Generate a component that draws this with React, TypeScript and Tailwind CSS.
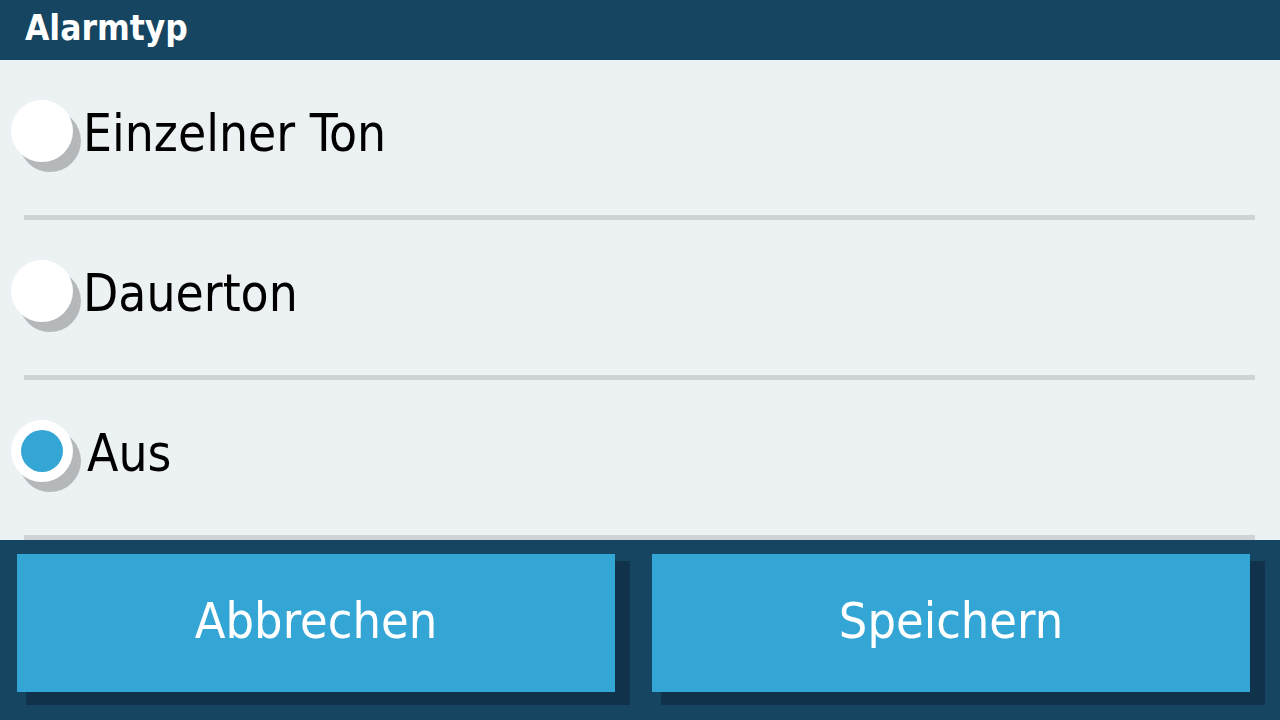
import { useState } from "react";

const options = [
    { id: "single", label: "Einzelner Ton" },
    { id: "continuous", label: "Dauerton" },
    { id: "off", label: "Aus" },
];

export default function App() {
    const [selected, setSelected] = useState("off");

    return (
        <div
            className="w-[1280px] h-[720px] flex flex-col bg-[#ECF1F4] overflow-hidden font-stretch-condensed"
            style={{ fontFamily: '"DejaVu Sans Condensed", "DejaVu Sans", sans-serif' }}
        >
            {/* Title bar */}
            <div className="h-[60px] shrink-0 bg-[#154561] flex items-center px-[25px] pb-[3px]">
                <h1 className="text-white font-bold text-[35px] leading-none">Alarmtyp</h1>
            </div>

            {/* Options */}
            <div className="flex-1 flex flex-col">
                {options.map((opt) => {
                    const active = selected === opt.id;
                    return (
                        <button
                            key={opt.id}
                            onClick={() => setSelected(opt.id)}
                            className="h-[160px] flex flex-col text-left"
                        >
                            <div className="h-[155px] w-full flex items-start pl-[11px]">
                                <div className="mt-[40px] w-[62px] h-[62px] shrink-0 rounded-full bg-white shadow-[8px_10px_0_#B4B8BB] flex items-center justify-center">
                                    {active && <div className="w-[42px] h-[42px] rounded-full bg-[#34A6D5]" />}
                                </div>
                                <span className={active ? "mt-[48px] ml-[14px] text-[51px] leading-none text-black" : "mt-[48px] ml-[10px] text-[51px] leading-none text-black"}>
                                    {opt.label}
                                </span>
                            </div>
                            <div className="mx-[24px] h-[5px] w-[1231px] bg-[#CFD3D6]" />
                        </button>
                    );
                })}
            </div>

            {/* Footer actions */}
            <div className="h-[180px] shrink-0 bg-[#154561] flex gap-[37px] pl-[17px] pt-[14px]">
                <button className="w-[598px] h-[138px] bg-[#34A6D5] shadow-[12px_10px_0_3px_#11324B] text-white text-[50px] leading-none flex items-center justify-center pb-[5px]">
                    Abbrechen
                </button>
                <button className="w-[598px] h-[138px] bg-[#34A6D5] shadow-[12px_10px_0_3px_#11324B] text-white text-[50px] leading-none flex items-center justify-center pb-[5px]">
                    Speichern
                </button>
            </div>
        </div>
    );
}
